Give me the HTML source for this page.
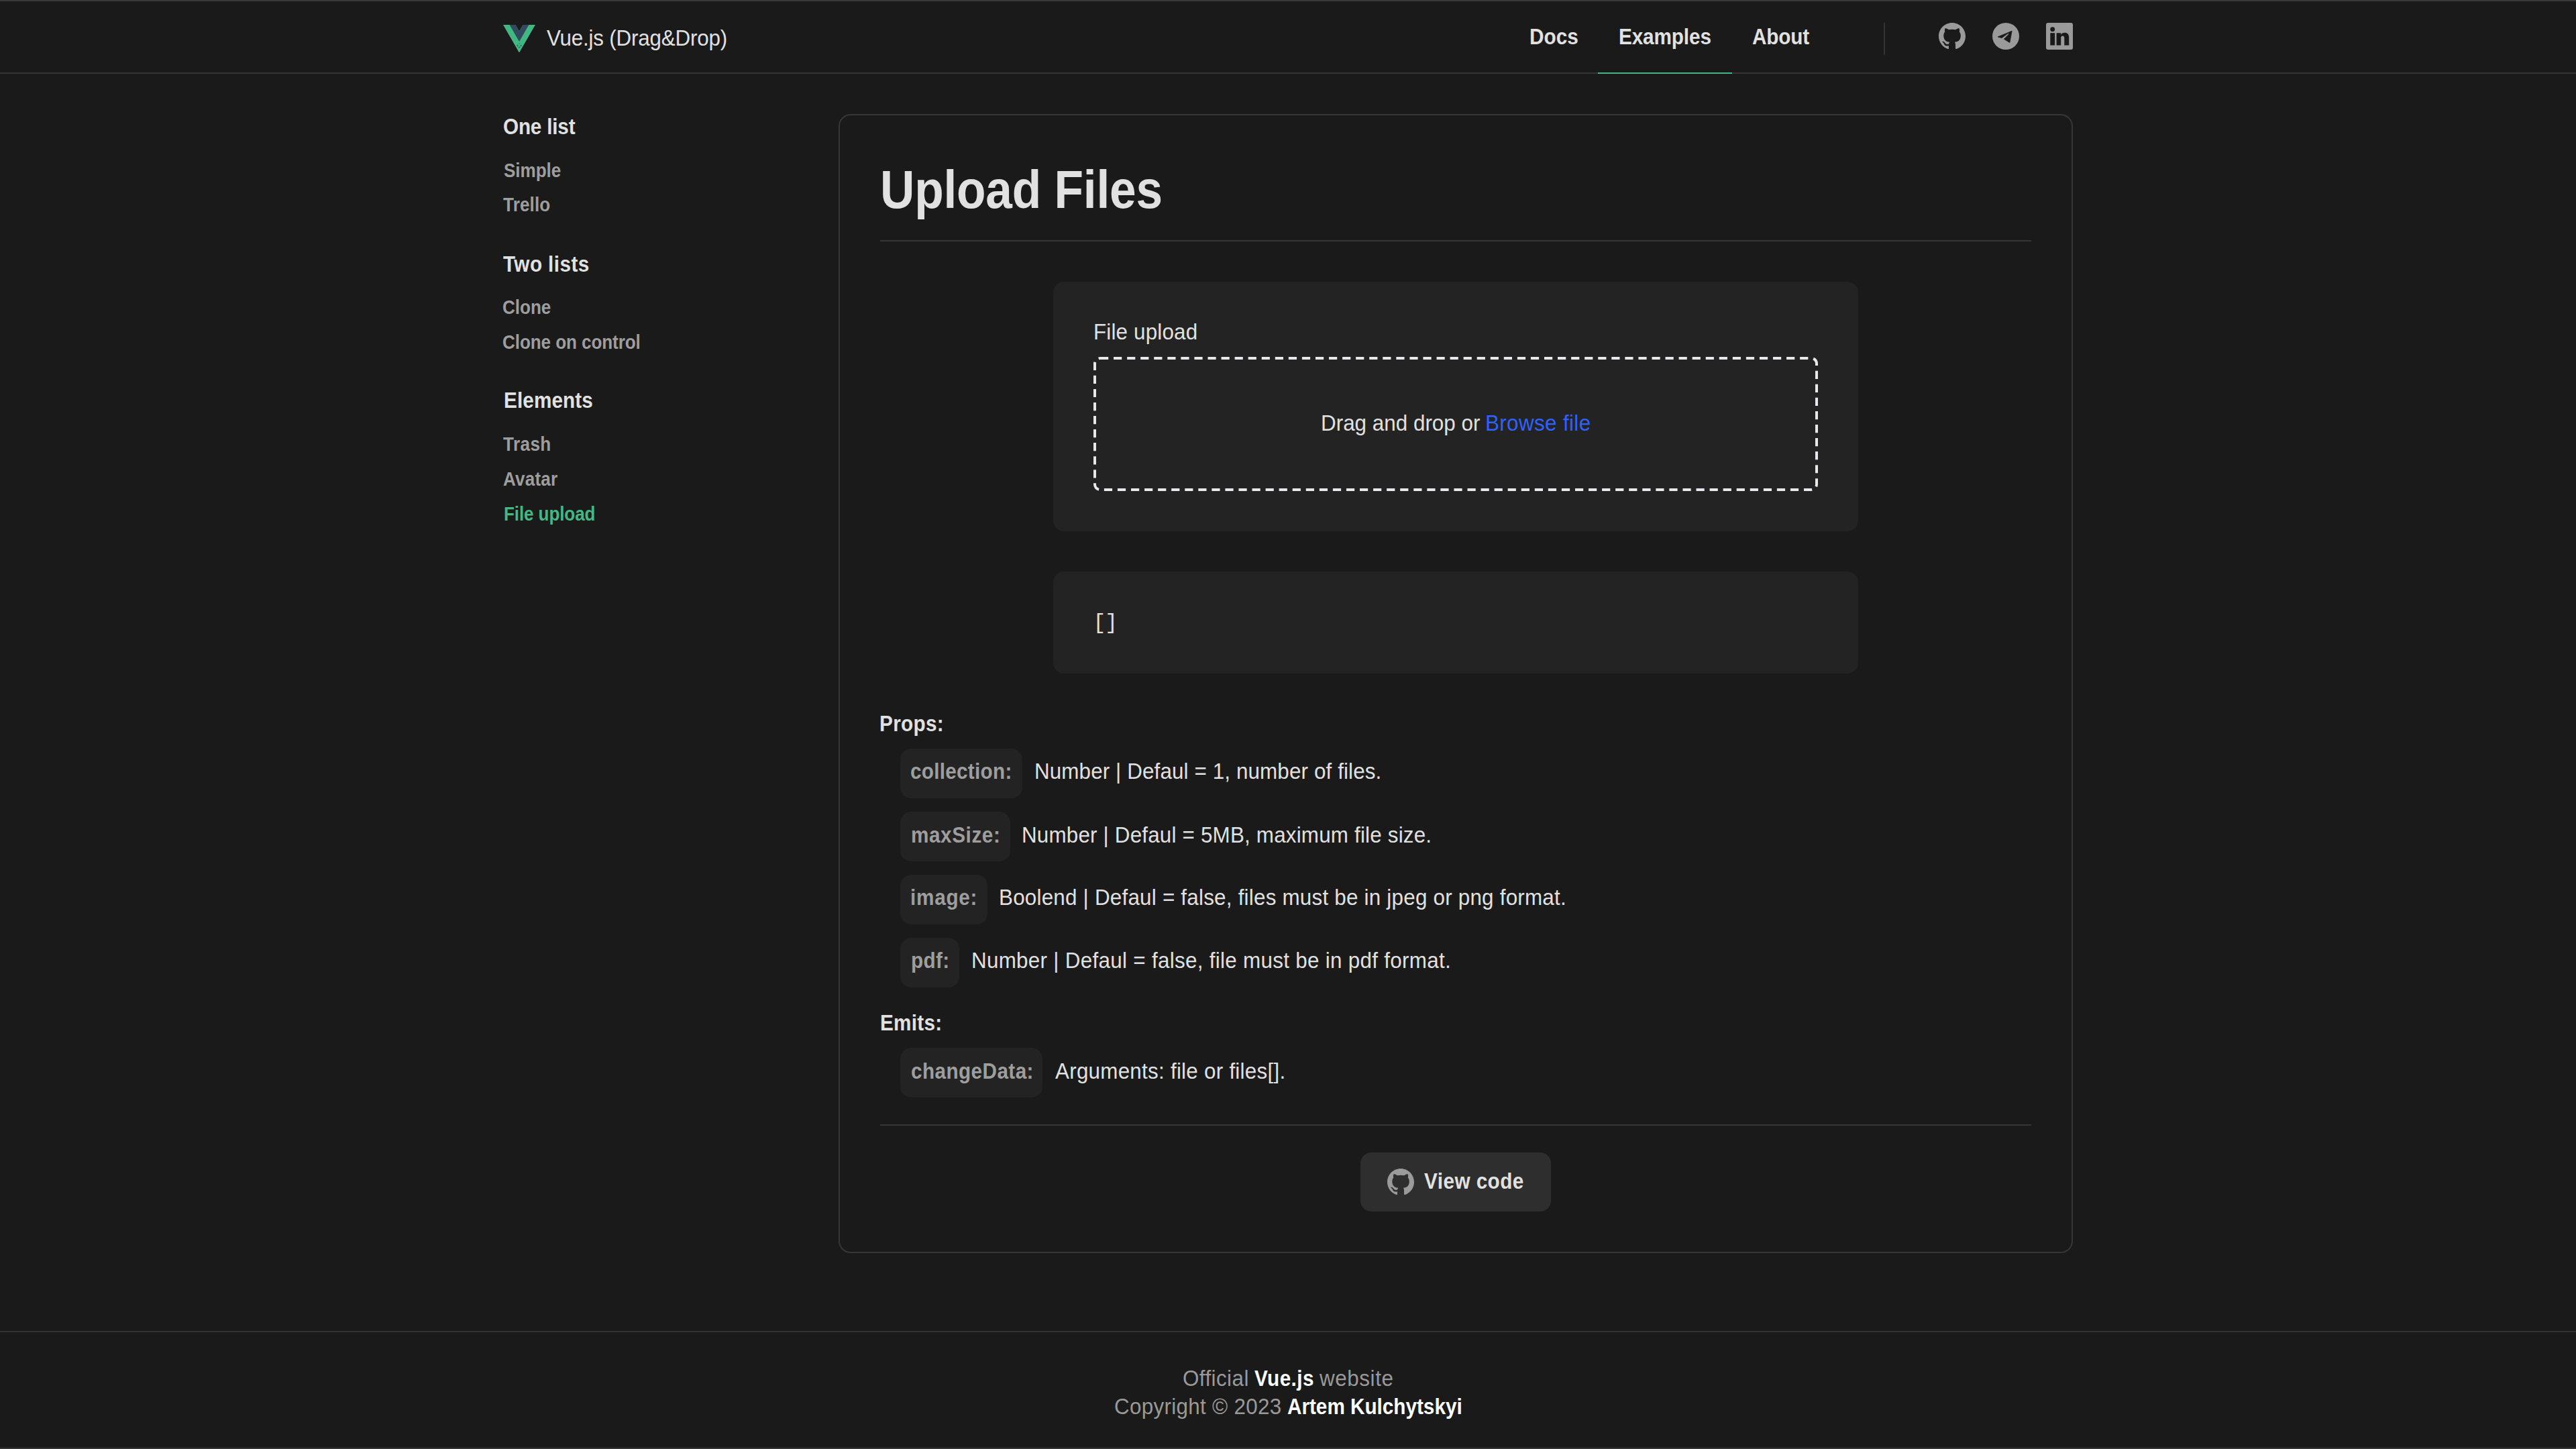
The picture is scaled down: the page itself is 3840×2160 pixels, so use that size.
<!DOCTYPE html>
<html lang="en">
<head>
<meta charset="utf-8">
<title>Vue.js (Drag&amp;Drop) - Upload Files</title>
<style>
*{box-sizing:border-box;margin:0;padding:0}
html,body{width:1920px;height:1080px;overflow:hidden;background:#1a1a1a}
@media (min-width:2400px){html{zoom:2}}
body{position:relative;font-family:"Liberation Sans",sans-serif;color:#e1e1e1;font-size:16px;line-height:1.15}
.t{position:absolute;white-space:nowrap;line-height:1.15}
.ln{position:absolute;left:0;width:1920px;height:1px}
.underline{position:absolute;left:1191px;top:54px;width:100px;height:1px;background:#42b883}
.vdiv{position:absolute;left:1404px;top:17px;width:1px;height:24px;background:#333}
.icon{position:absolute;top:17px;width:20px;height:20px;display:block}
.card{position:absolute;left:625px;top:85px;width:920px;height:849px;border:1px solid #363636;border-radius:9px}
.hr{position:absolute;left:656px;width:858px;height:1px;background:#363636}
.box{position:absolute;left:785px;width:600px;background:#232323;border-radius:8px}
.chip{position:absolute;left:671px;height:37px;background:#232323;border-radius:8px}
.btn{position:absolute;left:1014px;top:859px;width:142px;height:44px;background:#2e2e2e;border-radius:8px}
.t b{color:#fff}
.mono{position:absolute;left:814.7px;top:455.3px;font-family:"Liberation Mono",monospace;font-size:15.6px;letter-spacing:-0.4px;color:#e1e1e1;line-height:1.15}
</style>
</head>
<body>
<div class="ln" style="top:0;background:#393939"></div>
<div class="ln" style="top:54px;background:#333"></div>

<svg style="position:absolute;left:375px;top:18.4px;width:24px;height:20.8px" viewBox="0 0 261.76 226.69" preserveAspectRatio="none"><path d="M161.096.001l-30.225 52.351L100.647.001H-.005l130.877 226.688L261.749.001z" fill="#41b883"/><path d="M161.096.001l-30.225 52.351L100.647.001H52.346l78.526 136.01L209.398.001z" fill="#34495e"/><g fill="#34495e" opacity="0.7"><circle cx="116.6" cy="168.7" r="6.5"/><circle cx="145.5" cy="168.7" r="6.5"/><circle cx="130.9" cy="182" r="6.5"/><circle cx="130.9" cy="153" r="6" opacity="0.5"/></g></svg>

<div class="underline"></div>
<div class="vdiv"></div>

<svg class="icon" style="left:1445px" viewBox="0 0 16 16"><path fill="#9a9a9a" d="M8 0C3.58 0 0 3.58 0 8c0 3.54 2.29 6.53 5.47 7.59.4.07.55-.17.55-.38 0-.19-.01-.82-.01-1.49-2.01.37-2.53-.49-2.69-.94-.09-.23-.48-.94-.82-1.13-.28-.15-.68-.52-.01-.53.63-.01 1.08.58 1.23.82.72 1.21 1.87.87 2.33.66.07-.52.28-.87.51-1.07-1.780-.2-3.640-.89-3.640-3.95 0-.87.31-1.59.82-2.150-.08-.2-.36-1.02.08-2.12 0 0 .67-.21 2.2.82.64-.18 1.32-.27 2-.27.68 0 1.36.09 2 .27 1.53-1.04 2.2-.82 2.2-.82.44 1.1.16 1.92.08 2.12.51.56.82 1.27.82 2.15 0 3.07-1.87 3.75-3.65 3.95.29.25.54.73.54 1.48 0 1.07-.01 1.93-.01 2.2 0 .21.15.46.55.38A8.013 8.013 0 0016 8c0-4.42-3.58-8-8-8z"/></svg>
<svg class="icon" style="left:1485px" viewBox="0 0 40 40"><circle cx="20" cy="20" r="20" fill="#9a9a9a"/><g fill="#1a1a1a" stroke="#1a1a1a" stroke-width="0.9" stroke-linejoin="round"><path d="M8.2 20.9 28.8 12.4 23.3 15.6 13.9 22.6Z"/><path d="M29 12.6 25.8 29.5 17.4 24.2 24.6 16.9Z"/><path d="M29 12.4 23.6 15.6 24.9 17Z"/></g></svg>
<svg class="icon" style="left:1525px" viewBox="0 0 40 40"><rect x="0" y="0" width="40" height="40" rx="3" fill="#9a9a9a"/><circle cx="9.7" cy="9.7" r="3.4" fill="#1a1a1a"/><rect x="6.3" y="15.2" width="6.8" height="18.3" fill="#1a1a1a"/><path fill="#1a1a1a" d="M15.6 15.2h6.6v2.6c1-1.8 2.9-3 5.5-3 4.4 0 6.5 2.6 6.5 7.2v11.5h-6.9V23c0-2.2-.8-3.5-2.6-3.5-1.9 0-2.5 1.4-2.5 3.5v10.5h-6.6z"/></svg>

<div class="card"></div>
<div class="hr" style="top:179px"></div>

<div class="box" style="top:210px;height:186px"></div>
<svg style="position:absolute;left:0;top:0;width:1920px;height:1080px;overflow:visible" viewBox="0 0 1920 1080"><rect x="816" y="267" width="538" height="98" rx="4" fill="none" stroke="#e6e8ee" stroke-width="2" stroke-dasharray="6.1 3.93"/></svg>

<div class="box" style="top:426px;height:76px"></div>
<div class="mono">[]</div>

<div class="chip" style="top:558px;width:91px"></div>
<div class="chip" style="top:605px;width:82px"></div>
<div class="chip" style="top:652px;width:65px"></div>
<div class="chip" style="top:699px;width:44px"></div>
<div class="chip" style="top:781px;width:106px"></div>

<div class="hr" style="top:838px"></div>
<div class="btn"></div>
<svg class="icon" style="left:1034px;top:871px" viewBox="0 0 16 16"><path fill="#9a9a9a" d="M8 0C3.58 0 0 3.58 0 8c0 3.54 2.29 6.530 5.47 7.59.4.07.55-.17.55-.38 0-.19-.01-.82-.01-1.49-2.01.37-2.53-.49-2.69-.94-.09-.23-.48-.94-.82-1.13-.28-.15-.68-.52-.01-.53.63-.01 1.08.58 1.23.82.72 1.21 1.87.87 2.33.66.07-.52.28-.87.51-1.07-1.78-.2-3.64-.89-3.64-3.95 0-.87.31-1.59.82-2.15-.08-.2-.36-1.02.08-2.12 0 0 .67-.21 2.2.82.64-.18 1.32-.27 2-.27.68 0 1.36.09 2 .27 1.53-1.04 2.2-.82 2.2-.82.44 1.1.16 1.92.08 2.12.51.56.82 1.27.82 2.15 0 3.07-1.87 3.75-3.65 3.95.29.25.54.73.54 1.48 0 1.07-.01 1.93-.01 2.2 0 .21.15.46.55.38A8.013 8.013 0 0016 8c0-4.42-3.58-8-8-8z"/></svg>

<div class="ln" style="top:992px;background:#333"></div>
<div class="ln" style="top:1079px;background:#363636"></div>

<div class="t" id="brand" style="left:407.60px;top:19.20px;font-size:16.5px;letter-spacing:-0.101px;color:#e1e1e1;transform:scaleX(0.95);transform-origin:0 0">Vue.js (Drag&amp;Drop)</div>
<div class="t" id="docs" style="left:1140.20px;top:18.20px;font-size:16.5px;letter-spacing:0.019px;color:#e1e1e1;font-weight:bold;transform:scaleX(0.9);transform-origin:0 0">Docs</div>
<div class="t" id="examples" style="left:1206.60px;top:18.20px;font-size:16.5px;letter-spacing:-0.058px;color:#e1e1e1;font-weight:bold;transform:scaleX(0.9);transform-origin:0 0">Examples</div>
<div class="t" id="about" style="left:1306.20px;top:18.20px;font-size:16.5px;letter-spacing:-0.100px;color:#e1e1e1;font-weight:bold;transform:scaleX(0.9);transform-origin:0 0">About</div>
<div class="t" id="s_onelist" style="left:375.10px;top:85.01px;font-size:16.5px;letter-spacing:-0.107px;color:#e1e1e1;font-weight:bold;transform:scaleX(0.9);transform-origin:0 0">One list</div>
<div class="t" id="s_simple" style="left:375.60px;top:118.80px;font-size:14.5px;letter-spacing:-0.040px;color:#9e9e9e;font-weight:bold;transform:scaleX(0.9);transform-origin:0 0">Simple</div>
<div class="t" id="s_trello" style="left:375.00px;top:144.70px;font-size:14.5px;letter-spacing:0.070px;color:#9e9e9e;font-weight:bold;transform:scaleX(0.9);transform-origin:0 0">Trello</div>
<div class="t" id="s_twolists" style="left:375.10px;top:187.31px;font-size:16.5px;letter-spacing:0.234px;color:#e1e1e1;font-weight:bold;transform:scaleX(0.9);transform-origin:0 0">Two lists</div>
<div class="t" id="s_clone" style="left:374.70px;top:220.91px;font-size:14.5px;letter-spacing:-0.024px;color:#9e9e9e;font-weight:bold;transform:scaleX(0.9);transform-origin:0 0">Clone</div>
<div class="t" id="s_clonectl" style="left:374.70px;top:246.80px;font-size:14.5px;letter-spacing:-0.056px;color:#9e9e9e;font-weight:bold;transform:scaleX(0.9);transform-origin:0 0">Clone on control</div>
<div class="t" id="s_elements" style="left:375.30px;top:289.01px;font-size:16.5px;letter-spacing:0.059px;color:#e1e1e1;font-weight:bold;transform:scaleX(0.9);transform-origin:0 0">Elements</div>
<div class="t" id="s_trash" style="left:375.10px;top:323.00px;font-size:14.5px;letter-spacing:0.224px;color:#9e9e9e;font-weight:bold;transform:scaleX(0.9);transform-origin:0 0">Trash</div>
<div class="t" id="s_avatar" style="left:375.00px;top:349.11px;font-size:14.5px;letter-spacing:0.100px;color:#9e9e9e;font-weight:bold;transform:scaleX(0.9);transform-origin:0 0">Avatar</div>
<div class="t" id="s_fileup" style="left:375.60px;top:375.00px;font-size:14.5px;letter-spacing:-0.070px;color:#42b883;font-weight:bold;transform:scaleX(0.9);transform-origin:0 0">File upload</div>
<div class="t" id="h1" style="left:655.90px;top:118.50px;font-size:40px;letter-spacing:-0.118px;color:#e1e1e1;font-weight:bold;transform:scaleX(0.89);transform-origin:0 0">Upload Files</div>
<div class="t" id="label" style="left:814.80px;top:238.01px;font-size:16.5px;letter-spacing:0.090px;color:#e1e1e1;transform:scaleX(0.95);transform-origin:0 0">File upload</div>
<div class="t" id="drag_a" style="left:984.50px;top:305.82px;font-size:16.5px;letter-spacing:0.015px;color:#e1e1e1;transform:scaleX(0.95);transform-origin:0 0">Drag and drop or</div>
<div class="t" id="drag_b" style="left:1107.00px;top:305.82px;font-size:16.5px;letter-spacing:0.200px;color:#2f62fb;transform:scaleX(0.95);transform-origin:0 0">Browse file</div>
<div class="t" id="props" style="left:655.40px;top:530.01px;font-size:16.5px;letter-spacing:0.180px;color:#e1e1e1;font-weight:bold;transform:scaleX(0.9);transform-origin:0 0">Props:</div>
<div class="t" id="c1" style="left:678.70px;top:565.70px;font-size:16.5px;letter-spacing:0.155px;color:#9e9e9e;font-weight:bold;transform:scaleX(0.9);transform-origin:0 0">collection:</div>
<div class="t" id="d1" style="left:771.10px;top:565.70px;font-size:16.5px;letter-spacing:0.068px;color:#e1e1e1;transform:scaleX(0.95);transform-origin:0 0">Number | Defaul = 1, number of files.</div>
<div class="t" id="c2" style="left:678.80px;top:613.01px;font-size:16.5px;letter-spacing:0.323px;color:#9e9e9e;font-weight:bold;transform:scaleX(0.9);transform-origin:0 0">maxSize:</div>
<div class="t" id="d2" style="left:761.60px;top:612.81px;font-size:16.5px;letter-spacing:0.104px;color:#e1e1e1;transform:scaleX(0.95);transform-origin:0 0">Number | Defaul = 5MB, maximum file size.</div>
<div class="t" id="c3" style="left:678.30px;top:659.51px;font-size:16.5px;letter-spacing:0.420px;color:#9e9e9e;font-weight:bold;transform:scaleX(0.9);transform-origin:0 0">image:</div>
<div class="t" id="d3" style="left:744.60px;top:659.51px;font-size:16.5px;letter-spacing:0.122px;color:#e1e1e1;transform:scaleX(0.95);transform-origin:0 0">Boolend | Defaul = false, files must be in jpeg or png format.</div>
<div class="t" id="c4" style="left:678.80px;top:706.51px;font-size:16.5px;letter-spacing:0.222px;color:#9e9e9e;font-weight:bold;transform:scaleX(0.9);transform-origin:0 0">pdf:</div>
<div class="t" id="d4" style="left:724.00px;top:706.51px;font-size:16.5px;letter-spacing:0.161px;color:#e1e1e1;transform:scaleX(0.95);transform-origin:0 0">Number | Defaul = false, file must be in pdf format.</div>
<div class="t" id="emits" style="left:655.80px;top:753.01px;font-size:16.5px;letter-spacing:0.150px;color:#e1e1e1;font-weight:bold;transform:scaleX(0.9);transform-origin:0 0">Emits:</div>
<div class="t" id="c5" style="left:678.80px;top:789.01px;font-size:16.5px;letter-spacing:0.235px;color:#9e9e9e;font-weight:bold;transform:scaleX(0.9);transform-origin:0 0">changeData:</div>
<div class="t" id="d5" style="left:786.60px;top:789.01px;font-size:16.5px;letter-spacing:0.139px;color:#e1e1e1;transform:scaleX(0.95);transform-origin:0 0">Arguments: file or files[].</div>
<div class="t" id="viewcode" style="left:1061.60px;top:871.01px;font-size:16.5px;letter-spacing:0.250px;color:#e1e1e1;font-weight:bold;transform:scaleX(0.9);transform-origin:0 0">View code</div>
<div class="t" id="foot1a" style="left:881.50px;top:1017.82px;font-size:16.5px;letter-spacing:0.236px;color:#999999;transform:scaleX(0.95);transform-origin:0 0">Official</div>
<div class="t" id="foot1b" style="left:935.10px;top:1017.82px;font-size:16.5px;letter-spacing:0.230px;color:#ffffff;font-weight:bold;transform:scaleX(0.9);transform-origin:0 0">Vue.js</div>
<div class="t" id="foot1c" style="left:983.40px;top:1017.82px;font-size:16.5px;letter-spacing:0.316px;color:#999999;transform:scaleX(0.95);transform-origin:0 0">website</div>
<div class="t" id="foot2a" style="left:830.30px;top:1039.02px;font-size:16.5px;letter-spacing:0.166px;color:#999999;transform:scaleX(0.95);transform-origin:0 0">Copyright © 2023</div>
<div class="t" id="foot2b" style="left:959.40px;top:1039.02px;font-size:16.5px;letter-spacing:-0.005px;color:#ffffff;font-weight:bold;transform:scaleX(0.9);transform-origin:0 0">Artem Kulchytskyi</div>
</body>
</html>
